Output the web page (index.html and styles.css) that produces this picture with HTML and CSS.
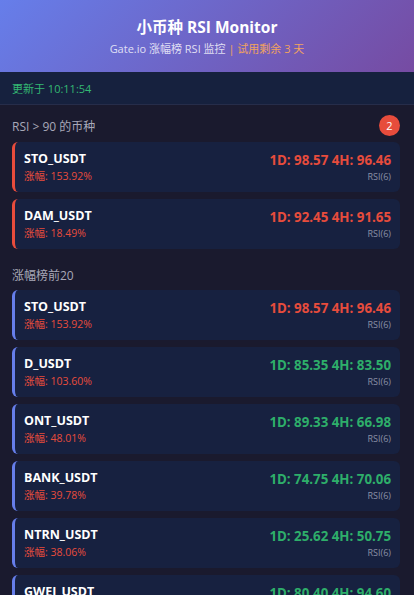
FILE: index.html
```html
<!DOCTYPE html>
<html lang="zh-CN">
<head>
    <meta charset="UTF-8">
    <meta name="viewport" content="width=device-width, initial-scale=1.0">
    <title>小币种 RSI Monitor</title>
    <link rel="stylesheet" href="styles.css">
</head>
<body>
    <header class="header">
        <h1>小币种 RSI Monitor</h1>
        <p class="subtitle">Gate.io 涨幅榜 RSI 监控 <span class="trial">| 试用剩余 3 天</span></p>
    </header>

    <div class="update-bar">更新于 10:11:54</div>

    <main class="content">
        <div class="section-head">
            <span class="section-title">RSI &gt; 90 的币种</span>
            <span class="badge">2</span>
        </div>
        <div class="list">
            <div class="card card-alert">
                <div class="coin">
                    <div class="symbol">STO_USDT</div>
                    <div class="change">涨幅: 153.92%</div>
                </div>
                <div class="rsi">
                    <div class="rsi-value high">1D: 98.57 4H: 96.46</div>
                    <div class="rsi-label">RSI(6)</div>
                </div>
            </div>
            <div class="card card-alert">
                <div class="coin">
                    <div class="symbol">DAM_USDT</div>
                    <div class="change">涨幅: 18.49%</div>
                </div>
                <div class="rsi">
                    <div class="rsi-value high">1D: 92.45 4H: 91.65</div>
                    <div class="rsi-label">RSI(6)</div>
                </div>
            </div>
        </div>

        <div class="section-head section-gap">
            <span class="section-title">涨幅榜前20</span>
        </div>
        <div class="list">
            <div class="card">
                <div class="coin">
                    <div class="symbol">STO_USDT</div>
                    <div class="change">涨幅: 153.92%</div>
                </div>
                <div class="rsi">
                    <div class="rsi-value high">1D: 98.57 4H: 96.46</div>
                    <div class="rsi-label">RSI(6)</div>
                </div>
            </div>
            <div class="card">
                <div class="coin">
                    <div class="symbol">D_USDT</div>
                    <div class="change">涨幅: 103.60%</div>
                </div>
                <div class="rsi">
                    <div class="rsi-value">1D: 85.35 4H: 83.50</div>
                    <div class="rsi-label">RSI(6)</div>
                </div>
            </div>
            <div class="card">
                <div class="coin">
                    <div class="symbol">ONT_USDT</div>
                    <div class="change">涨幅: 48.01%</div>
                </div>
                <div class="rsi">
                    <div class="rsi-value">1D: 89.33 4H: 66.98</div>
                    <div class="rsi-label">RSI(6)</div>
                </div>
            </div>
            <div class="card">
                <div class="coin">
                    <div class="symbol">BANK_USDT</div>
                    <div class="change">涨幅: 39.78%</div>
                </div>
                <div class="rsi">
                    <div class="rsi-value">1D: 74.75 4H: 70.06</div>
                    <div class="rsi-label">RSI(6)</div>
                </div>
            </div>
            <div class="card">
                <div class="coin">
                    <div class="symbol">NTRN_USDT</div>
                    <div class="change">涨幅: 38.06%</div>
                </div>
                <div class="rsi">
                    <div class="rsi-value">1D: 25.62 4H: 50.75</div>
                    <div class="rsi-label">RSI(6)</div>
                </div>
            </div>
            <div class="card">
                <div class="coin">
                    <div class="symbol">GWEI_USDT</div>
                    <div class="change">涨幅: 35.21%</div>
                </div>
                <div class="rsi">
                    <div class="rsi-value">1D: 80.40 4H: 94.60</div>
                    <div class="rsi-label">RSI(6)</div>
                </div>
            </div>
        </div>
    </main>
</body>
</html>
```

FILE: styles.css
```css
body {
    font-family: "Open Sans", "Noto Sans CJK SC", sans-serif;
    margin: 0;
    background-color: #1a1a2e;
    color: #fff;
}

.header {
    height: 72px;
    box-sizing: border-box;
    padding-top: 17px;
    text-align: center;
    background: linear-gradient(135deg, #667eea 0%, #764ba2 100%);
}

.header h1 {
    margin: 0;
    font-size: 15.5px;
    line-height: 20px;
    font-weight: bold;
}

.subtitle {
    margin: 4px 0 0;
    font-size: 11px;
    line-height: 16px;
    color: rgba(255, 255, 255, 0.8);
}

.trial {
    color: #f0a35e;
}

.update-bar {
    height: 33px;
    box-sizing: border-box;
    padding-left: 12px;
    display: flex;
    align-items: center;
    background-color: #16213e;
    border-bottom: 1px solid #262d4a;
    color: #34b873;
    font-size: 11px;
}

.content {
    padding: 10px 14px 0 12px;
}

.section-head {
    display: flex;
    justify-content: space-between;
    align-items: center;
    height: 21px;
    margin-bottom: 6px;
}

.section-gap {
    height: 20px;
    margin-top: 16px;
    margin-bottom: 5px;
}

.section-title {
    font-size: 12px;
    color: #a8a8b8;
}

.badge {
    width: 21px;
    height: 21px;
    border-radius: 50%;
    background-color: #e74c3c;
    color: #fff;
    font-size: 11px;
    display: flex;
    justify-content: center;
    align-items: center;
}

.list {
    display: flex;
    flex-direction: column;
    gap: 7px;
}

.card {
    height: 50px;
    box-sizing: border-box;
    padding: 1px 9px 0 9px;
    display: flex;
    justify-content: space-between;
    align-items: center;
    background-color: #172140;
    border-left: 3px solid #667eea;
    border-radius: 6px;
}

.card-alert {
    border-left-color: #e74c3c;
}

.symbol {
    font-size: 12.5px;
    font-weight: bold;
    line-height: 18px;
}

.change {
    font-size: 10.5px;
    line-height: 17px;
    color: #e74c3c;
}

.rsi {
    text-align: right;
}

.rsi-value {
    font-size: 13.3px;
    font-weight: bold;
    line-height: 19px;
    color: #2eae6a;
}

.rsi-value.high {
    color: #e74c3c;
}

.rsi-label {
    font-size: 9px;
    line-height: 14px;
    color: #8a90a6;
}
```
